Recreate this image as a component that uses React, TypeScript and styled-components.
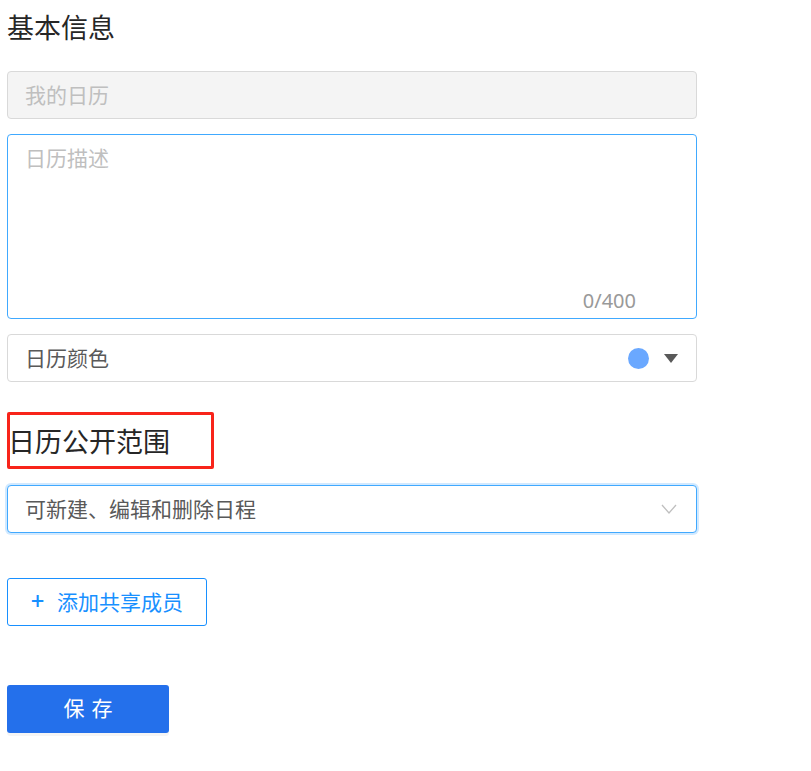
import React from 'react';
import styled, { createGlobalStyle } from 'styled-components';

const GlobalStyle = createGlobalStyle`
  body {
    margin: 0;
    background: #ffffff;
    font-family: "Noto Sans CJK SC", "Noto Sans", "Liberation Sans", sans-serif;
  }
`;

const Page = styled.div`
  width: 690px;
  padding: 0 0 40px 7px;
  display: flex;
  flex-direction: column;
`;

const SectionTitle = styled.h2<{ $top: number; $highlight?: boolean }>`
  position: relative;
  margin: ${(p) => p.$top}px 0 0 ${(p) => (p.$highlight ? 1 : 0)}px;
  font-size: 27px;
  line-height: 32px;
  font-weight: 400;
  color: #262626;

  ${(p) =>
    p.$highlight &&
    `
    &::after {
      content: '';
      position: absolute;
      left: -1px;
      top: -13px;
      width: 201px;
      height: 51px;
      border: 3px solid #f8241a;
      border-radius: 2px;
    }
  `}
`;

const Field = styled.div<{ $top: number; $disabled?: boolean; $focused?: boolean }>`
  box-sizing: border-box;
  margin-top: ${(p) => p.$top}px;
  height: 48px;
  display: flex;
  align-items: center;
  padding: 0 18px 3px 17px;
  border: 1px solid ${(p) => (p.$focused ? '#40a9ff' : '#d9d9d9')};
  border-radius: 4px;
  background: ${(p) => (p.$disabled ? '#f4f4f4' : '#ffffff')};
  box-shadow: ${(p) => (p.$focused ? '0 0 0 2px rgba(24, 144, 255, 0.2)' : 'none')};
  font-size: 21px;
  color: ${(p) => (p.$disabled ? '#bfbfbf' : '#595959')};
`;

const FieldText = styled.span`
  flex: 1;
`;

const TextArea = styled.div`
  box-sizing: border-box;
  position: relative;
  margin-top: 15px;
  height: 185px;
  padding: 8px 17px;
  border: 1px solid #40a9ff;
  border-radius: 4px;
  font-size: 21px;
  line-height: 28px;
  color: #bfbfbf;
`;

const Counter = styled.span`
  position: absolute;
  right: 60px;
  bottom: 4px;
  font-family: "Noto Sans", "Liberation Sans", sans-serif;
  font-size: 20px;
  line-height: 26px;
  color: #999999;
`;

const ColorDot = styled.span`
  width: 21px;
  height: 21px;
  border-radius: 50%;
  background: #6aa8ff;
  margin: 3px 15px 0 0;
`;

const Caret = styled.span`
  width: 0;
  height: 0;
  margin-top: 3px;
  border-left: 7px solid transparent;
  border-right: 7px solid transparent;
  border-top: 9px solid #595959;
`;

const Chevron = styled.svg`
  width: 16px;
  height: 10px;
  margin: 3px 1px 0 0;
`;

const OutlineButton = styled.button`
  box-sizing: border-box;
  align-self: flex-start;
  margin-top: 45px;
  width: 200px;
  height: 48px;
  display: flex;
  align-items: center;
  justify-content: center;
  gap: 13px;
  padding: 0 0 3px;
  border: 1px solid #1890ff;
  border-radius: 3px;
  background: #ffffff;
  color: #1890ff;
  font-family: inherit;
  font-size: 21px;
  cursor: pointer;
`;

const Plus = styled.span`
  font-size: 23px;
  font-weight: 500;
  line-height: 1;
  margin-top: -1px;
`;

const PrimaryButton = styled.button`
  box-sizing: border-box;
  align-self: flex-start;
  margin-top: 59px;
  width: 162px;
  height: 48px;
  border: none;
  border-radius: 3px;
  background: #2470eb;
  color: #ffffff;
  font-family: inherit;
  font-size: 21px;
  line-height: 1;
  letter-spacing: 7px;
  padding: 0 0 4px 7px;
  box-shadow: 0 3px 0 rgba(0, 0, 0, 0.04);
  cursor: pointer;
`;

export default function App() {
  return (
    <>
      <GlobalStyle />
      <Page>
        <SectionTitle $top={11}>基本信息</SectionTitle>
        <Field $top={28} $disabled>
          <FieldText>我的日历</FieldText>
        </Field>
        <TextArea>
          日历描述
          <Counter>0/400</Counter>
        </TextArea>
        <Field $top={15}>
          <FieldText>日历颜色</FieldText>
          <ColorDot />
          <Caret />
        </Field>
        <SectionTitle $top={43} $highlight>日历公开范围</SectionTitle>
        <Field $top={28} $focused>
          <FieldText>可新建、编辑和删除日程</FieldText>
          <Chevron viewBox="0 0 16 10">
            <path d="M1 1 L8 9 L15 1" fill="none" stroke="#bfbfbf" strokeWidth="1.3" />
          </Chevron>
        </Field>
        <OutlineButton>
          <Plus>+</Plus>
          添加共享成员
        </OutlineButton>
        <PrimaryButton>保存</PrimaryButton>
      </Page>
    </>
  );
}
